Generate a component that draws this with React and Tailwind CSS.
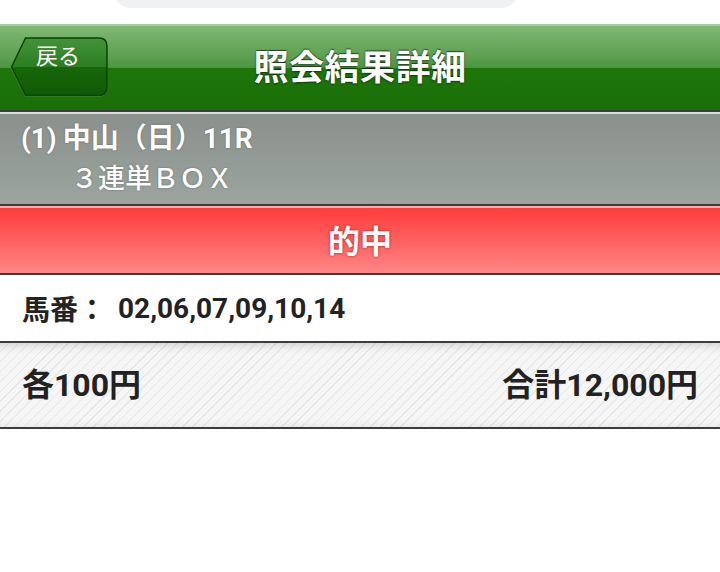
export default function App() {
  const jp = "font-['Roboto','Noto_Sans_CJK_JP',sans-serif]";
  return (
    <div className={`w-[720px] h-[572px] bg-white overflow-hidden ${jp}`}>
      {/* top area with search pill bottom */}
      <div className="h-[24px] bg-white flex justify-start overflow-hidden">
        <div className="ml-[112px] w-[408px] h-[40px] mt-[-32px] rounded-[22px] bg-[#f0f1f3]" />
      </div>

      {/* green header */}
      <div className="relative h-[88px] border-t-2 border-b-2 border-t-[#a9c9a1] border-b-[#3c3c3c] bg-[linear-gradient(#80b874_0%,#5fa153_35%,#4a9540_50%,#1e7609_50%,#1a6f08_100%)] flex items-center justify-center">
        <div className="absolute left-[9px] top-[11px] w-[100px] h-[61px]">
          <svg width="100" height="61" viewBox="0 0 100 61" className="absolute inset-0">
            <defs>
              <linearGradient id="bb" x1="0" y1="0" x2="0" y2="1">
                <stop offset="0" stopColor="#43933a" />
                <stop offset="0.5" stopColor="#2c7d22" />
                <stop offset="0.5" stopColor="#176709" />
                <stop offset="1" stopColor="#0f5a05" />
              </linearGradient>
            </defs>
            <path d="M1.5,30.5 L16,1.5 H90 Q98.5,1.5 98.5,10 V51 Q98.5,59.5 90,59.5 H16 Z" fill="#6fa864" />
            <path d="M2.5,30 L16.5,1 H90 Q98,1 98,9.5 V50 Q98,58.5 90,58.5 H16.5 Z" fill="url(#bb)" stroke="#0b4203" strokeWidth="1.5" />
          </svg>
          <span className="absolute left-[27px] top-[6px] text-white text-[22px] leading-none font-['Noto_Sans_CJK_JP',sans-serif]">戻る</span>
        </div>
        <h1 className="text-white font-bold text-[35px] leading-none tracking-[0.5px] font-['Noto_Sans_CJK_JP',sans-serif] [text-shadow:0_-1px_1px_rgba(0,0,0,0.6),0_1px_2px_rgba(0,0,0,0.5)] mt-[-8px]">
          照会結果詳細
        </h1>
      </div>

      {/* gray race info */}
      <div className="h-[94px] border-t-2 border-b-2 border-t-[#d9dcda] border-b-[#3c3c3c] bg-[linear-gradient(#8a918c,#9ba49f)] pl-[21px] pt-[6px] text-white [text-shadow:0_0_2px_rgba(0,0,0,0.35)]">
        <div className="text-[28px] leading-[38px] font-bold">(1)<span className="ml-[6px]">中山（日）11R</span></div>
        <div className="text-[27px] leading-[38px] font-medium pl-[50px] font-['Noto_Sans_CJK_JP',sans-serif]">３連単ＢＯＸ</div>
      </div>

      {/* hit */}
      <div className="h-[69px] border-t-2 border-b-2 border-t-[#ffb0b0] border-b-[#3c3c3c] bg-[linear-gradient(#ff3b3b,#ff8686)] flex items-center justify-center">
        <span className="text-white font-bold text-[32px] leading-none font-['Noto_Sans_CJK_JP',sans-serif] [text-shadow:0_0_3px_rgba(120,0,0,0.7)] mt-[-3px]">的中</span>
      </div>

      {/* horse numbers */}
      <div className="h-[68px] border-b-2 border-b-[#3c3c3c] bg-white flex items-center pl-[22px] text-[#222] font-bold text-[28px] leading-none">
        <span className="font-['Noto_Sans_CJK_JP',sans-serif]">馬番：</span>
        <span className="ml-[12px] mt-[2px]">02,06,07,09,10,14</span>
      </div>

      {/* amounts */}
      <div className="h-[86px] border-b-2 border-b-[#3c3c3c] bg-[repeating-linear-gradient(135deg,#f6f6f6_0px,#f6f6f6_6px,#e6e6e6_6px,#e6e6e6_7px)] shadow-[inset_0_10px_10px_-8px_rgba(0,0,0,0.16),inset_0_-8px_8px_-7px_rgba(0,0,0,0.08)] flex items-center justify-between pl-[22px] pr-[22px] text-[#222] font-bold text-[32px] leading-none">
        <span>各100円</span>
        <span>合計12,000円</span>
      </div>
    </div>
  );
}
